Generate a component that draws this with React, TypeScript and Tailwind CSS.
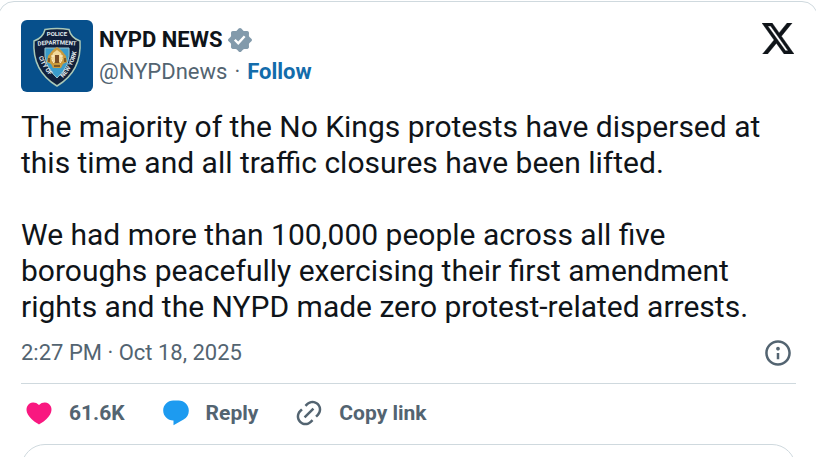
import React from 'react';

const body = `The majority of the No Kings protests have dispersed at this time and all traffic closures have been lifted.

We had more than 100,000 people across all five boroughs peacefully exercising their first amendment rights and the NYPD made zero protest-related arrests.`;

const Avatar = () => (
    <svg viewBox="0 0 72 72" className="w-[72px] h-[72px] rounded-md shrink-0" role="img" aria-label="NYPD shield">
        <defs>
            <path id="dept" d="M14 26Q36 23 58 26" />
            <path id="city" d="M17 32Q18 45 32 59" />
            <path id="york" d="M40 60Q54 46 56 29" />
        </defs>
        <rect width="72" height="72" fill="#07508c" />
        <path
            d="M24 9.500Q36 7.500 48 9.500Q50 18 59 21Q61 51 36 66Q11 51 13 21Q22 18 24 9.500Z"
            fill="#10203c"
            stroke="#a9c8b8"
            strokeWidth="1.500"
        />
        <path d="M24 28H48Q50 46 36 58Q22 46 24 28Z" fill="#3a9ccb" stroke="#9bc4cc" />
        {/* crest */}
        <path d="M31 31L33 29L36 27L39 29L41 31L45 36L46 42L42 44L40 48H32L30 44L26 42L27 36Z" fill="#c99a3d" />
        <path d="M32 33L36 30L40 33L42 39L39 42H33L30 39Z" fill="#f2d99a" />
        <path d="M34 35h4v8h-4z" fill="#7b4e25" />
        <path d="M28 38v4M44 38v4M33 46h6" stroke="#68431c" strokeWidth="1.500" />
        <path d="M30 36h3M39 36h3M31 40l2 3M41 40l-2 3" stroke="#fff6dc" />
        <g fill="#e5edf0" fontFamily="Roboto, sans-serif" fontWeight="700" fontSize="6">
            <text x="36" y="16" textAnchor="middle">POLICE</text>
            <text><textPath href="#dept" startOffset="50%" textAnchor="middle">DEPARTMENT</textPath></text>
            <text><textPath href="#city" startOffset="50%" textAnchor="middle">CITY OF</textPath></text>
            <text><textPath href="#york" startOffset="50%" textAnchor="middle">NEW YORK</textPath></text>
        </g>
    </svg>
);

const VerifiedIcon = () => (
    <svg viewBox="0 0 22 22" className="w-7 h-7" fill="#829aab" role="img" aria-label="Verified account">
        <path
            fillRule="evenodd"
            clipRule="evenodd"
            d="M12.05 2.056c-.568-.608-1.532-.608-2.1 0l-1.393 1.49c-.284.303-.685.47-1.1.455L5.42 3.932c-.832-.028-1.514.654-1.486 1.486l.069 2.039c.014.415-.152.816-.456 1.1l-1.49 1.392c-.608.568-.608 1.533 0 2.101l1.49 1.393c.304.284.47.684.456 1.1l-.07 2.038c-.027.832.655 1.514 1.487 1.486l2.038-.069c.415-.014.816.152 1.1.455l1.392 1.49c.569.609 1.533.609 2.102 0l1.393-1.49c.283-.303.684-.47 1.099-.455l2.038.069c.832.028 1.515-.654 1.486-1.486L18 14.542c-.015-.415.152-.815.455-1.099l1.49-1.393c.608-.568.608-1.533 0-2.101l-1.49-1.393c-.303-.283-.47-.684-.455-1.1l.068-2.038c.029-.832-.654-1.514-1.486-1.486l-2.038.07c-.415.013-.816-.153-1.1-.456zm-5.817 9.367l3.429 3.428 5.683-6.206-1.347-1.247-4.4 4.795-2.072-2.072z"
        />
    </svg>
);

const XLogo = () => (
    <svg viewBox="1.254 2.25 21.573 19.5" preserveAspectRatio="none" className="w-8 h-[31px]" fill="#0f1419" stroke="#0f1419" strokeWidth="0.3" aria-hidden="true">
        <path d="M18.244 2.25h3.308l-7.227 8.26 8.502 11.24H16.17l-5.214-6.817L4.99 21.75H1.68l7.73-8.835L1.254 2.25H8.08l4.713 6.231zm-1.161 17.52h1.833L7.084 4.126H5.117z" />
    </svg>
);

const icons = {
    info: 'M13.5 8.5c0 .83-.67 1.5-1.5 1.5s-1.5-.67-1.5-1.5S11.17 7 12 7s1.5.67 1.5 1.5zM13 17v-5h-2v5h2zm-1 5.25c5.66 0 10.25-4.59 10.25-10.25S17.66 1.75 12 1.75 1.75 6.34 1.75 12 6.34 22.25 12 22.25zM20.25 12c0 4.56-3.69 8.25-8.25 8.25S3.75 16.56 3.75 12 7.44 3.75 12 3.75s8.25 3.69 8.25 8.25z',
    heart: 'M20.884 13.19c-1.351 2.48-4.001 5.12-8.379 7.67l-.503.3-.504-.3c-4.379-2.55-7.029-5.19-8.382-7.67-1.36-2.5-1.41-4.86-.514-6.67.887-1.79 2.647-2.91 4.601-3.01 1.651-.09 3.368.56 4.798 2.01 1.429-1.45 3.146-2.1 4.796-2.01 1.954.1 3.714 1.22 4.601 3.01.896 1.81.846 4.17-.514 6.67z',
    reply: 'M1.751 10c0-4.42 3.584-8 8.005-8h4.366c4.49 0 8.129 3.64 8.129 8.13 0 2.96-1.607 5.68-4.196 7.11l-8.054 4.46v-3.69h-.067c-4.49.1-8.183-3.51-8.183-8.01z',
    link: 'M18.36 5.64c-1.95-1.96-5.11-1.96-7.07 0L9.88 7.05 8.46 5.64l1.42-1.42c2.73-2.73 7.16-2.73 9.9 0 2.73 2.74 2.73 7.17 0 9.9l-1.42 1.42-1.41-1.42 1.41-1.41c1.96-1.96 1.96-5.12 0-7.07zm-2.12 3.53l-7.07 7.07-1.41-1.41 7.07-7.07 1.41 1.41zm-12.02.71l1.42-1.42 1.41 1.42-1.41 1.41c-1.96 1.96-1.96 5.12 0 7.07 1.95 1.96 5.11 1.96 7.07 0l1.41-1.41 1.42 1.41-1.42 1.42c-2.73 2.73-7.16 2.73-9.9 0-2.73-2.74-2.73-7.17 0-9.9z',
};

const Icon = ({ name, className = '' }: { name: keyof typeof icons; className?: string }) => (
    <svg viewBox="0 0 24 24" className={`w-[30px] h-[30px] shrink-0 ${className}`} fill="currentColor" aria-hidden="true">
        <path d={icons[name]} />
    </svg>
);

const actions: { icon: keyof typeof icons; label: string; color: string }[] = [
    { icon: 'heart', label: '61.6K', color: 'text-[#f91880]' },
    { icon: 'reply', label: 'Reply', color: 'text-[#1d9bf0]' },
    { icon: 'link', label: 'Copy link', color: 'text-[#536471]' },
];

export default function App() {
    return (
        <div className="overflow-hidden bg-white pt-px font-['Roboto',sans-serif] text-[#0f1419]">
            <article className="-mx-[2px] rounded-t-2xl border border-[#cfd9de] pl-[22px] pr-[21px] pt-[18px]">
                <header className="flex items-start justify-between pr-[2px]">
                    <div className="flex gap-[6px]">
                        <Avatar />
                        <div className="pt-1">
                            <div className="flex items-center gap-1 h-8">
                                <a href="#profile" className="text-[22px] leading-8 font-bold">NYPD NEWS</a>
                                <VerifiedIcon />
                            </div>
                            <div className="flex gap-[7px] text-[22px] leading-8 text-[#536471]">
                                <a href="#profile">@NYPDnews</a>
                                <span>·</span>
                                <a href="#follow" className="font-bold text-[#136cab]">Follow</a>
                            </div>
                        </div>
                    </div>
                    <a href="#post" aria-label="View on X" className="pt-[3px]"><XLogo /></a>
                </header>

                <p className="mt-[17px] whitespace-pre-line text-[30px] leading-9">{body}</p>

                <div className="flex items-center justify-between pt-3 pb-[14px] pr-[3px] text-[22px] leading-8 text-[#536471]">
                    <a href="#post">2:27 PM · Oct 18, 2025</a>
                    <button type="button" aria-label="Ads info and privacy"><Icon name="info" /></button>
                </div>

                <div className="flex items-center gap-9 border-t border-[#cfd9de] pt-[13px] pb-[15px] px-[3px]">
                    {actions.map(({ icon, label, color }) => (
                        <button key={icon} type="button" className="flex items-center gap-[15px] text-[21px] leading-8 font-bold text-[#536471]">
                            <Icon name={icon} className={color} />
                            {label}
                        </button>
                    ))}
                </div>

                {/* replies button, cut off by the frame */}
                <div className="h-[14px] overflow-hidden">
                    <button type="button" aria-label="Read replies" className="block w-full h-12 rounded-full border border-[#cfd9de]" />
                </div>
            </article>
        </div>
    );
}
